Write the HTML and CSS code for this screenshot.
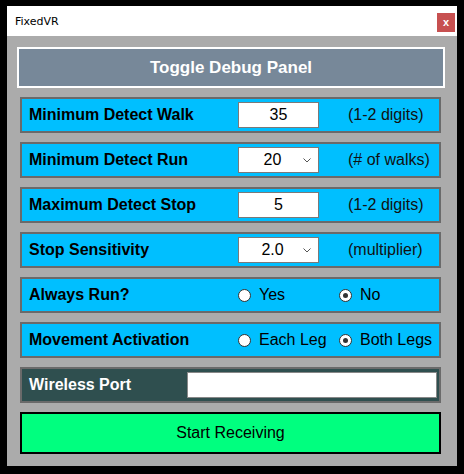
FILE: index.html
```html
<!DOCTYPE html>
<html>
<head>
<meta charset="utf-8">
<link rel="stylesheet" href="styles.css">
</head>
<body>
<div class="window">
  <div class="titlebar">
    <span class="title">FixedVR</span>
    <span class="close">x</span>
  </div>
  <div class="content">
    <div class="toggle">Toggle Debug Panel</div>

    <div class="row">
      <span class="label">Minimum Detect Walk</span>
      <span class="field">35</span>
      <span class="hint">(1-2 digits)</span>
    </div>

    <div class="row">
      <span class="label">Minimum Detect Run</span>
      <span class="field select"><span class="val">20</span><span class="chev"><svg width="8" height="5" viewBox="0 0 8 5"><path d="M0.5 0.5 L4 4 L7.5 0.5" fill="none" stroke="#555" stroke-width="1"/></svg></span></span>
      <span class="hint">(# of walks)</span>
    </div>

    <div class="row">
      <span class="label">Maximum Detect Stop</span>
      <span class="field">5</span>
      <span class="hint">(1-2 digits)</span>
    </div>

    <div class="row">
      <span class="label">Stop Sensitivity</span>
      <span class="field select"><span class="val">2.0</span><span class="chev"><svg width="8" height="5" viewBox="0 0 8 5"><path d="M0.5 0.5 L4 4 L7.5 0.5" fill="none" stroke="#555" stroke-width="1"/></svg></span></span>
      <span class="hint">(multiplier)</span>
    </div>

    <div class="row radios">
      <span class="label">Always Run?</span>
      <span class="opt"><span class="radio"></span>Yes</span>
      <span class="opt"><span class="radio on"></span>No</span>
    </div>

    <div class="row radios">
      <span class="label">Movement Activation</span>
      <span class="opt"><span class="radio"></span>Each Leg</span>
      <span class="opt"><span class="radio on"></span>Both Legs</span>
    </div>

    <div class="row wireless">
      <span class="label">Wireless Port</span>
      <span class="port"></span>
    </div>

    <div class="start">Start Receiving</div>
  </div>
</div>
</body>
</html>
```

FILE: styles.css
```css
html, body {
  margin: 0;
  padding: 0;
  background: #000;
  width: 464px;
  height: 474px;
  overflow: hidden;
  font-family: "Liberation Sans", Arial, sans-serif;
}

.window {
  margin: 6px 0 0 7px;
  width: 450px;
  height: 460px;
  background: #ababab;
  display: flex;
  flex-direction: column;
}

.titlebar {
  height: 30px;
  background: #fff;
  display: flex;
  align-items: flex-start;
  justify-content: space-between;
}

.title {
  font-family: "DejaVu Sans", sans-serif;
  font-size: 11px;
  color: #000;
  margin: 9px 0 0 8px;
}

.close {
  width: 18px;
  height: 19px;
  margin: 7px 2px 0 0;
  background: #c75050;
  color: #fff;
  font-size: 11px;
  font-weight: bold;
  display: flex;
  align-items: center;
  justify-content: center;
  line-height: 1;
}

.content {
  padding: 11px 0 0 10px;
  display: flex;
  flex-direction: column;
}

.toggle {
  width: 424px;
  height: 37px;
  border: 2px solid #fff;
  background: #778899;
  color: #fff;
  font-weight: bold;
  font-size: 17px;
  display: flex;
  align-items: center;
  justify-content: center;
  margin-bottom: 9px;
}

.row {
  margin-left: 3px;
  width: 417px;
  height: 32px;
  border: 2px solid #6a6a6a;
  background: #00bfff;
  display: grid;
  grid-template-columns: 216px 81px 1fr;
  align-items: center;
  margin-bottom: 9px;
  font-size: 16px;
}

.label {
  font-weight: bold;
  color: #000;
  padding-left: 7px;
  white-space: nowrap;
}

.field {
  height: 24px;
  border: 1px solid #7a7a7a;
  background: #fff;
  display: flex;
  align-items: center;
  justify-content: center;
  color: #000;
}

.select {
  justify-content: flex-start;
}

.select .val {
  flex: 1;
  text-align: center;
  padding-left: 10px;
}

.chev {
  width: 22px;
  display: flex;
  justify-content: center;
  align-items: center;
}

.hint {
  padding-left: 29px;
  color: #111;
  white-space: nowrap;
}

.radios {
  grid-template-columns: 216px 101px 1fr;
}

.opt {
  display: flex;
  align-items: center;
  gap: 8px;
  color: #000;
  white-space: nowrap;
}

.radio {
  width: 11px;
  height: 11px;
  border: 1px solid #333;
  border-radius: 50%;
  background: #fff;
  display: flex;
  align-items: center;
  justify-content: center;
  flex: none;
}

.radio.on::after {
  content: "";
  width: 5px;
  height: 5px;
  border-radius: 50%;
  background: #333;
}

.wireless {
  background: #2f4f4f;
  grid-template-columns: 165px 1fr;
}

.wireless .label {
  color: #fff;
}

.port {
  width: 248px;
  height: 24px;
  border: 1px solid #888;
  background: #fff;
}

.start {
  margin-left: 3px;
  width: 417px;
  height: 38px;
  border: 2px solid #000;
  background: #00ff7f;
  color: #000;
  font-size: 16px;
  display: flex;
  align-items: center;
  justify-content: center;
}
```
